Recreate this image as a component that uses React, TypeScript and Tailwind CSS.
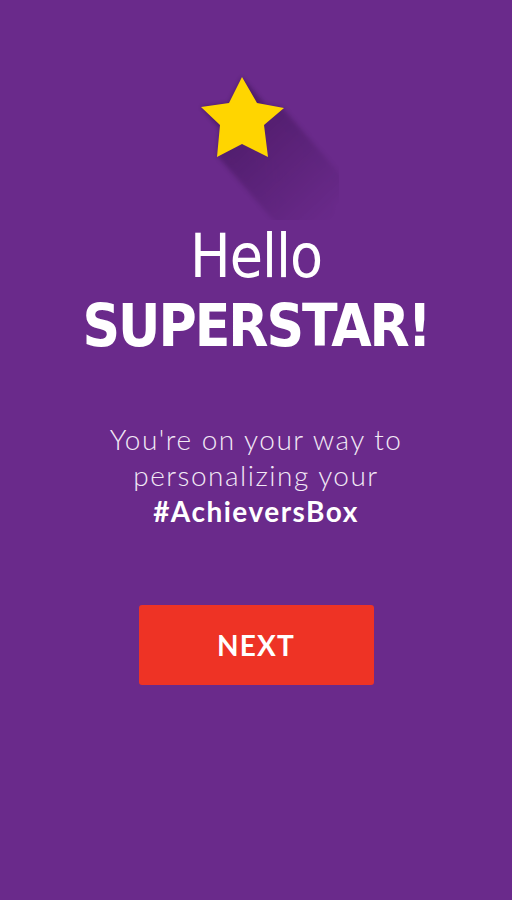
import React from "react";

const STAR = "63,17 78,43 105,48 85,65 89,97 63,84 38,97 41,65 22,47 50,43";

const StarBadge = () => {
  const copies = Array.from({ length: 44 }, (_, i) => i * 1.6);
  return (
    <svg width="160" height="160" viewBox="0 0 160 160" className="block">
      <defs>
        <linearGradient id="fade" x1="0.3" y1="0.3" x2="0.95" y2="1" gradientUnits="objectBoundingBox">
          <stop offset="0" stopColor="#fff" stopOpacity="1" />
          <stop offset="1" stopColor="#fff" stopOpacity="0" />
        </linearGradient>
        <mask id="shadowMask" maskUnits="userSpaceOnUse" x="0" y="0" width="160" height="160">
          <rect x="0" y="0" width="160" height="160" fill="url(#fade)" />
        </mask>
        <filter id="soft" x="-20%" y="-20%" width="140%" height="140%">
          <feGaussianBlur stdDeviation="2" />
        </filter>
      </defs>
      <g mask="url(#shadowMask)">
        <g filter="url(#soft)" opacity="0.34">
          {copies.map((d) => (
            <polygon key={d} points={STAR} fill="#1a0626" transform={`translate(${d} ${d * 1.15})`} />
          ))}
        </g>
      </g>
      <polygon points={STAR} fill="#ffd500" />
    </svg>
  );
};

export default function App() {
  return (
    <div className="w-[512px] h-[900px] bg-[#6a2a8b] flex flex-col items-center text-white">
      <div className="mt-[60px] ml-[6px]">
        <StarBadge />
      </div>

      <h1 className="mt-[6px] text-center font-['DejaVu_Sans_Condensed','Roboto',sans-serif] leading-none">
        <span className="block text-[60px] font-normal tracking-[-1px]">Hello</span>
        <span className="block mt-[11px] text-[58px] font-bold tracking-[-2px]">SUPERSTAR!</span>
      </h1>

      <p className="mt-[66px] text-center font-['Lato',sans-serif] font-light text-[28px] leading-[36px] tracking-[1.5px] text-[#f2e9f6]">
        You're on your way to
        <br />
        personalizing your
        <br />
        <span className="font-bold text-white tracking-[1.5px]">#AchieversBox</span>
      </p>

      <button
        type="button"
        className="mt-[76px] w-[235px] h-[80px] rounded-[3px] bg-[#ee3325] font-['Lato',sans-serif] font-bold text-[28px] tracking-[1.2px] text-white"
      >
        NEXT
      </button>
    </div>
  );
}
